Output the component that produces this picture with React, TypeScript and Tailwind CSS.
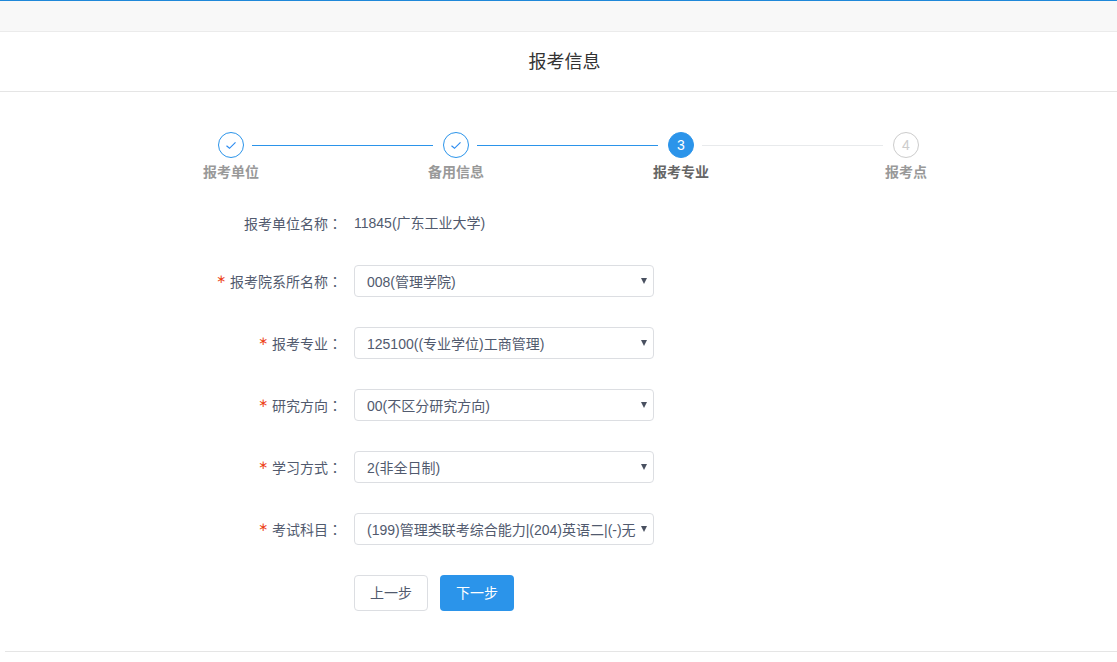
import React, { useState } from 'react';
import clsx from 'clsx';

type StepStatus = 'finish' | 'process' | 'wait';

interface Step {
  title: string;
  status: StepStatus;
}

interface Field {
  id: string;
  label: string;
  options: string[];
}

const STEPS: Step[] = [
  { title: '报考单位', status: 'finish' },
  { title: '备用信息', status: 'finish' },
  { title: '报考专业', status: 'process' },
  { title: '报考点', status: 'wait' },
];

const FIELDS: Field[] = [
  { id: 'college', label: '报考院系所名称', options: ['008(管理学院)'] },
  { id: 'major', label: '报考专业', options: ['125100((专业学位)工商管理)'] },
  { id: 'direction', label: '研究方向', options: ['00(不区分研究方向)'] },
  { id: 'mode', label: '学习方式', options: ['2(非全日制)'] },
  { id: 'subject', label: '考试科目', options: ['(199)管理类联考综合能力|(204)英语二|(-)无|(-)无'] },
];

// 全角冒号，居中显示
const Colon = () => <span className="font-['Noto_Sans_CJK_TC',sans-serif]">：</span>;

const StepItem = ({ step, index }: { step: Step; index: number }) => {
  const last = index === STEPS.length - 1;

  return (
    <li
      className={clsx('flex items-start', !last && 'flex-1')}
      aria-current={step.status === 'process' ? 'step' : undefined}
    >
      <div className="flex w-14 flex-col items-center gap-1">
        <span
          className={clsx(
            'flex size-[26px] items-center justify-center rounded-full border text-sm',
            step.status === 'finish' && 'border-[#2b94ea] text-[#2d8cf0]',
            step.status === 'process' && 'border-[#2b94ea] bg-[#2b94ea] text-white',
            step.status === 'wait' && 'border-[#cccccc] text-[#cccccc]'
          )}
        >
          {step.status === 'finish' ? (
            <svg width="12" height="12" viewBox="0 0 12 12" fill="none" stroke="currentColor" strokeWidth="1.2">
              <path d="M1.5 6.8 L4.5 9.3 L10.5 3.3" />
            </svg>
          ) : (
            index + 1
          )}
        </span>
        <span
          className={clsx(
            'text-sm leading-5 font-bold whitespace-nowrap',
            step.status === 'process' ? 'text-[#666666]' : 'text-[#999999]'
          )}
        >
          {step.title}
        </span>
      </div>
      {!last && (
        <span
          className={clsx(
            'mt-[13px] -mr-[5px] -ml-[7px] h-px flex-1',
            step.status === 'finish' ? 'bg-[#2b94ea]' : 'bg-[#e8eaec]'
          )}
        />
      )}
    </li>
  );
};

const SelectField = ({ field }: { field: Field }) => {
  const [value, setValue] = useState(field.options[0]);

  return (
    <div className="flex items-center gap-3">
      <label htmlFor={field.id} className="flex w-[139px] items-center justify-end gap-1">
        <span className="pb-1 font-['DejaVu_Sans',sans-serif] text-xs leading-none text-[#ed3f14]">∗</span>
        <span>
          {field.label}
          <Colon />
        </span>
      </label>
      <div className="relative w-[300px]">
        <select
          id={field.id}
          value={value}
          onChange={(e) => setValue(e.target.value)}
          className="h-8 w-full appearance-none rounded border border-[#dcdee2] bg-white pt-px pr-[17px] pl-3 text-sm text-[#515a6e] outline-none focus:border-[#2d8cf0]"
        >
          {field.options.map((option) => (
            <option key={option} value={option}>
              {option}
            </option>
          ))}
        </select>
        <svg
          className="pointer-events-none absolute top-3 right-[7px]"
          width="6"
          height="7"
          viewBox="0 0 6 7"
          fill="#495060"
        >
          <path d="M0 1 H6 L3 7 Z" />
        </svg>
      </div>
    </div>
  );
};

export default function App() {
  return (
    <div className="bg-white font-['Liberation_Sans','Noto_Sans_CJK_SC',sans-serif] text-sm text-[#515a6e]">
      <div className="h-8 border-t border-b border-t-[#1f88d9] border-b-[#ebebeb] bg-[#f8f8f8]" />

      <header className="border-b border-[#e5e5e5] pt-px pl-3">
        <h1 className="text-center text-lg leading-[58px] text-[#333333]">报考信息</h1>
      </header>

      <main className="pt-10 pl-5">
        <div className="mx-auto max-w-[731px]">
          <ol className="flex">
            {STEPS.map((step, i) => (
              <StepItem key={step.title} step={step} index={i} />
            ))}
          </ol>

          <form className="mt-[30px] flex flex-col gap-[30px]" onSubmit={(e) => e.preventDefault()}>
            <div className="flex gap-3 leading-[22px]">
              <span className="w-[139px] text-right">
                报考单位名称
                <Colon />
              </span>
              <span>11845(广东工业大学)</span>
            </div>

            {FIELDS.map((field) => (
              <SelectField key={field.id} field={field} />
            ))}

            <div className="flex gap-3 pl-[151px]">
              <button type="button" className="h-9 w-[74px] rounded border border-[#dcdee2] bg-white">
                上一步
              </button>
              <button type="submit" className="h-9 w-[74px] rounded bg-[#2b94ea] text-white">
                下一步
              </button>
            </div>
          </form>
        </div>
      </main>

      <hr className="mt-10 ml-[5px] border-[#e5e5e5]" />
    </div>
  );
}
